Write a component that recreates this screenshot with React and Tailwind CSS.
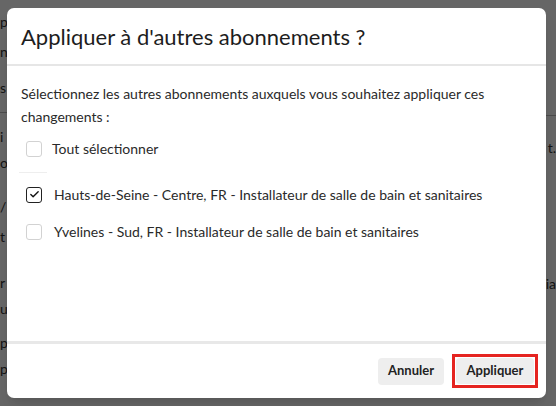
import { Check } from 'lucide-react'

const Checkbox = ({ checked }) => (
  <span
    className={
      checked
        ? 'flex h-[16px] w-[16px] shrink-0 items-center justify-center rounded-[3px] border-[1.5px] border-[#222] bg-white'
        : 'flex h-[16px] w-[16px] shrink-0 items-center justify-center rounded-[3px] border border-[#d2d2d2] bg-white'
    }
  >
    {checked && <Check className="h-[11px] w-[11px] text-[#111]" strokeWidth={3} />}
  </span>
)

const App = () => {
  return (
    <div className="relative h-[406px] w-[556px] overflow-hidden bg-white font-['Lato',sans-serif] text-[#222]">
      {/* Page behind the dialog */}
      <div className="flex h-full justify-between text-[14px] leading-[20px] text-[#333]">
        <div className="flex flex-col">
          <span className="mt-[12px]">p</span>
          <span className="mt-[10px]">n</span>
          <span className="mt-[16px]">s</span>
          <div className="mt-[14px] h-px w-[8px] bg-[#bbb]" />
          <span className="mt-[14px]">i</span>
          <span className="mt-[6px]">o</span>
          <span className="mt-[24px]">/</span>
          <span className="mt-[10px]">t</span>
          <span className="mt-[26px]">r</span>
          <span className="mt-[6px]">u</span>
          <span className="mt-[14px]">p</span>
          <span className="mt-[6px]">p</span>
        </div>
        <div className="flex flex-col items-end">
          <div className="mt-[115px] h-px w-[10px] bg-[#bbb]" />
          <span className="mt-[22px]">t.</span>
          <span className="mt-[116px]">ia</span>
        </div>
      </div>

      {/* Overlay */}
      <div className="absolute inset-0 bg-black/60" />

      {/* Dialog */}
      <div className="absolute left-[7px] top-[8px] flex h-[390px] w-[539px] flex-col overflow-hidden rounded-[7px] bg-white shadow-lg">
        {/* Header */}
        <div className="flex h-[58px] shrink-0 items-center border-b-2 border-[#e6e6e6] px-[14px]">
          <h2 className="text-[22px] font-normal text-[#1d1d1d]">
            Appliquer à d'autres abonnements ?
          </h2>
        </div>

        {/* Body */}
        <div className="flex-1 px-[14px] pt-[16px]">
          <p className="text-[14px] leading-[23px] text-[#2a2a2a]">
            Sélectionnez les autres abonnements auxquels vous souhaitez appliquer ces changements :
          </p>

          <label className="mt-[10px] flex items-center gap-[10px] pl-[5px] text-[14px] text-[#2a2a2a]">
            <Checkbox />
            Tout sélectionner
          </label>
          <div className="ml-[-2px] mt-[13px] h-px w-[28px] bg-[#eee]" />

          <div className="mt-[11px] flex flex-col gap-[16px]">
            <label className="flex items-center gap-[12px] pl-[5px] text-[14px] text-[#2a2a2a]">
              <Checkbox checked />
              Hauts-de-Seine - Centre, FR - Installateur de salle de bain et sanitaires
            </label>
            <label className="flex items-center gap-[12px] pl-[5px] text-[14px] text-[#2a2a2a]">
              <Checkbox />
              Yvelines - Sud, FR - Installateur de salle de bain et sanitaires
            </label>
          </div>
        </div>

        {/* Footer */}
        <div className="flex h-[57px] shrink-0 items-center justify-end gap-[8px] border-t-[3px] border-[#e8e8e8] pr-[8px]">
          <button className="h-[27px] w-[66px] rounded-[4px] bg-[#eeeeee] text-[13px] font-bold text-[#222]">
            Annuler
          </button>
          <div className="flex h-[34px] w-[86px] items-center justify-center border-[3px] border-[#e52420]">
            <button className="h-[26px] w-[78px] rounded-[4px] bg-[#eeeeee] text-[13px] font-bold text-[#222]">
              Appliquer
            </button>
          </div>
        </div>
      </div>
    </div>
  )
}

export default App
